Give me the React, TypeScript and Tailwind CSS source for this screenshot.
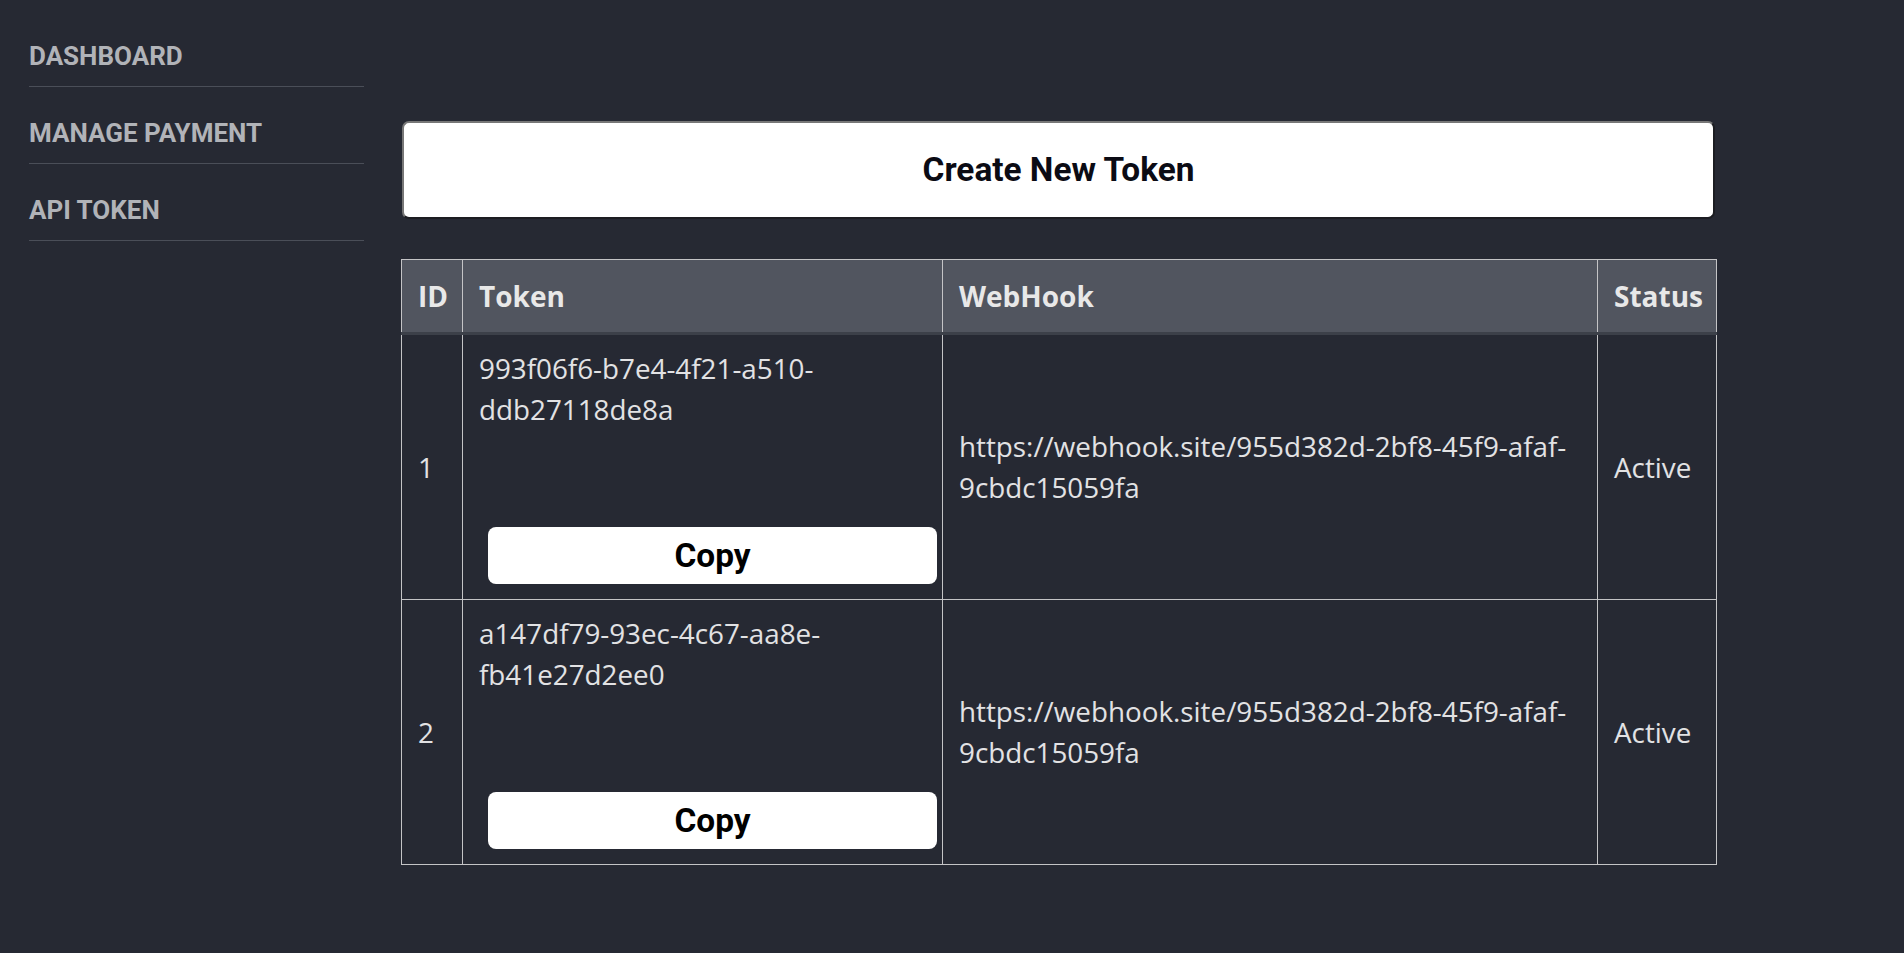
import React from "react";

const rows = [
  {
    id: 1,
    token: ["993f06f6-b7e4-4f21-a510-", "ddb27118de8a"],
    hook: ["https://webhook.site/955d382d-2bf8-45f9-afaf-", "9cbdc15059fa"],
    status: "Active",
  },
  {
    id: 2,
    token: ["a147df79-93ec-4c67-aa8e-", "fb41e27d2ee0"],
    hook: ["https://webhook.site/955d382d-2bf8-45f9-afaf-", "9cbdc15059fa"],
    status: "Active",
  },
];

export default function App() {
  const nav = ["DASHBOARD", "MANAGE PAYMENT", "API TOKEN"];
  return (
    <div className="min-h-[953px] w-full bg-[#262933] flex">
      <aside className="ml-[29px] w-[335px] pt-[10px] shrink-0">
        {nav.map((n) => (
          <div
            key={n}
            className="pt-[31px] pb-[15px] border-b border-[#4a4e58] text-[26px] leading-[30px] font-bold text-[#b1b3b8]"
            style={{ fontFamily: "Roboto, sans-serif" }}
          >
            {n}
          </div>
        ))}
      </aside>
      <main className="ml-[37px] w-[1315px] pt-[121px] shrink-0">
        <button
          className="w-[1313px] ml-[1px] h-[98px] bg-white rounded-[7px] border-2 border-t-[#777777] border-l-[#777777] border-b-[#1c1d22] border-r-[#1c1d22] text-[33.4px] font-bold text-[#0b0b14] flex items-center justify-center"
          style={{ fontFamily: "Roboto, sans-serif" }}
        >
          Create New Token
        </button>
        <table
          className="mt-[40px] w-[1315px] table-fixed border-collapse text-[#e2e2e4]"
          style={{ fontFamily: "'Open Sans', sans-serif" }}
        >
          <colgroup>
            <col className="w-[61px]" />
            <col className="w-[480px]" />
            <col className="w-[655px]" />
            <col className="w-[119px]" />
          </colgroup>
          <thead>
            <tr className="bg-[#51555f]">
              {["ID", "Token", "WebHook", "Status"].map((h) => (
                <th
                  key={h}
                  className="border border-[#c4c4c6] border-b-[3px] border-b-[#3c4049] px-[16px] py-[15px] text-left text-[28px] leading-[42px] font-bold text-[#e8e8e8] whitespace-nowrap"
                >
                  {h}
                </th>
              ))}
            </tr>
          </thead>
          <tbody>
            {rows.map((r) => (
              <tr key={r.id}>
                <td className="border border-[#c4c4c6] px-[16px] pt-[14px] pb-[15px] align-middle text-[27.8px] leading-[42px] font-normal">
                  {r.id}
                </td>
                <td className="border border-[#c4c4c6] pl-[16px] pr-0 pt-[13px] pb-[15px] align-top text-[27.8px] leading-[41px] font-normal">
                  <div>
                    {r.token[0]}
                    <br />
                    {r.token[1]}
                  </div>
                  <button
                    className="mt-[97px] ml-[9px] w-[449px] h-[57px] bg-white rounded-[8px] text-[33.4px] font-bold text-black flex items-center justify-center"
                    style={{ fontFamily: "Roboto, sans-serif" }}
                  >
                    Copy
                  </button>
                </td>
                <td className="border border-[#c4c4c6] px-[16px] pt-[14px] pb-[15px] align-middle text-[27.8px] leading-[41px] font-normal">
                  {r.hook[0]}
                  <br />
                  {r.hook[1]}
                </td>
                <td className="border border-[#c4c4c6] px-[16px] pt-[14px] pb-[15px] align-middle text-[27.8px] leading-[42px] font-normal">
                  {r.status}
                </td>
              </tr>
            ))}
          </tbody>
        </table>
      </main>
    </div>
  );
}
